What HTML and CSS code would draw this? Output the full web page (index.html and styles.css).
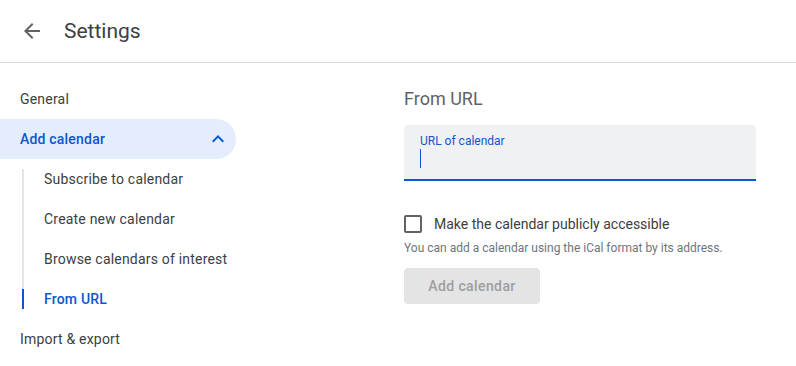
FILE: index.html
```html
<!DOCTYPE html>
<html>
<head>
	<meta charset="UTF-8"/>
	<title>Settings</title>
	<link rel="stylesheet" href="styles.css">
</head>
<body>

<header class="topbar">
	<svg class="back-icon" width="24" height="24" viewBox="0 0 24 24"><path d="M20 11H7.83l5.59-5.59L12 4l-8 8 8 8 1.41-1.41L7.83 13H20v-2z"/></svg>
	<h1 class="title">Settings</h1>
</header>

<div class="layout">
	<nav class="sidebar">
		<div class="nav-item">General</div>
		<div class="nav-item nav-open">
			<span>Add calendar</span>
			<svg width="24" height="24" viewBox="0 0 24 24"><path d="M12 8l-6 6 1.41 1.41L12 10.83l4.59 4.58L18 14z"/></svg>
		</div>
		<div class="sub-list">
			<div class="sub-item">Subscribe to calendar</div>
			<div class="sub-item">Create new calendar</div>
			<div class="sub-item">Browse calendars of interest</div>
			<div class="sub-item sub-active">From URL</div>
		</div>
		<div class="nav-item">Import &amp; export</div>
	</nav>

	<main class="content">
		<h2 class="section-title">From URL</h2>

		<div class="field">
			<label class="field-label">URL of calendar</label>
			<span class="caret"></span>
		</div>

		<div class="check-row">
			<span class="checkbox"></span>
			<span>Make the calendar publicly accessible</span>
		</div>
		<p class="hint">You can add a calendar using the iCal format by its address.</p>

		<button class="btn" disabled>Add calendar</button>
	</main>
</div>

</body>
</html>
```

FILE: styles.css
```css
html {
	background: #fff;
	font-family: Roboto, "Liberation Sans", sans-serif;
	color: #3c4043;
}

body {
	margin: 0;
	padding: 0;
}

h1, h2, p {
	margin: 0;
	padding: 0;
}

/* top bar */
.topbar {
	display: flex;
	align-items: center;
	gap: 20px;
	height: 62px;
	padding-left: 20px;
	border-bottom: 1px solid #dadce0;
}

.back-icon {
	fill: #5f6368;
}

.title {
	font-size: 21px;
	font-weight: 400;
	color: #3c4043;
}

.layout {
	display: flex;
}

/* sidebar */
.sidebar {
	width: 236px;
	padding-top: 16px;
	font-size: 14px;
	letter-spacing: 0.2px;
}

.nav-item {
	display: flex;
	align-items: center;
	justify-content: space-between;
	height: 40px;
	padding: 0 6px 0 20px;
}

.nav-open {
	background: #e3edfc;
	color: #0b57d0;
	font-weight: 500;
	border-radius: 0 20px 20px 0;
}

.nav-open svg {
	fill: #0b57d0;
}

.sub-list {
	display: flex;
	flex-direction: column;
	gap: 20px;
	margin: 10px 0 10px 22px;
	border-left: 2px solid #e3e5e8;
}

.sub-item {
	height: 20px;
	line-height: 20px;
	padding-left: 20px;
}

.sub-active {
	margin-left: -2px;
	border-left: 2px solid #0b57d0;
	color: #0b57d0;
	font-weight: 500;
}

/* main */
.content {
	width: 352px;
	margin-left: 168px;
	padding-top: 16px;
}

.section-title {
	height: 40px;
	line-height: 40px;
	font-size: 18px;
	font-weight: 400;
	color: #5f6368;
}

.field {
	display: flex;
	flex-direction: column;
	box-sizing: border-box;
	height: 56px;
	margin-top: 6px;
	padding: 8px 16px 0;
	background: #f0f1f3;
	border-bottom: 2px solid #0b57d0;
	border-radius: 4px 4px 0 0;
}

.field-label {
	font-size: 12px;
	line-height: 16px;
	color: #0b57d0;
}

.caret {
	width: 1px;
	height: 19px;
	background: #0b57d0;
}

.check-row {
	display: flex;
	align-items: center;
	gap: 12px;
	height: 24px;
	margin-top: 31px;
	font-size: 14px;
}

.checkbox {
	width: 14px;
	height: 14px;
	border: 2px solid #5f6368;
	border-radius: 2px;
}

.hint {
	margin-top: 4px;
	font-size: 12px;
	line-height: 16px;
	color: #70757a;
}

.btn {
	width: 136px;
	height: 36px;
	margin-top: 12px;
	border: 0;
	border-radius: 4px;
	background: #e4e4e4;
	color: #9e9e9e;
	font-family: inherit;
	font-size: 14px;
	font-weight: 500;
	letter-spacing: 0.4px;
}
```
